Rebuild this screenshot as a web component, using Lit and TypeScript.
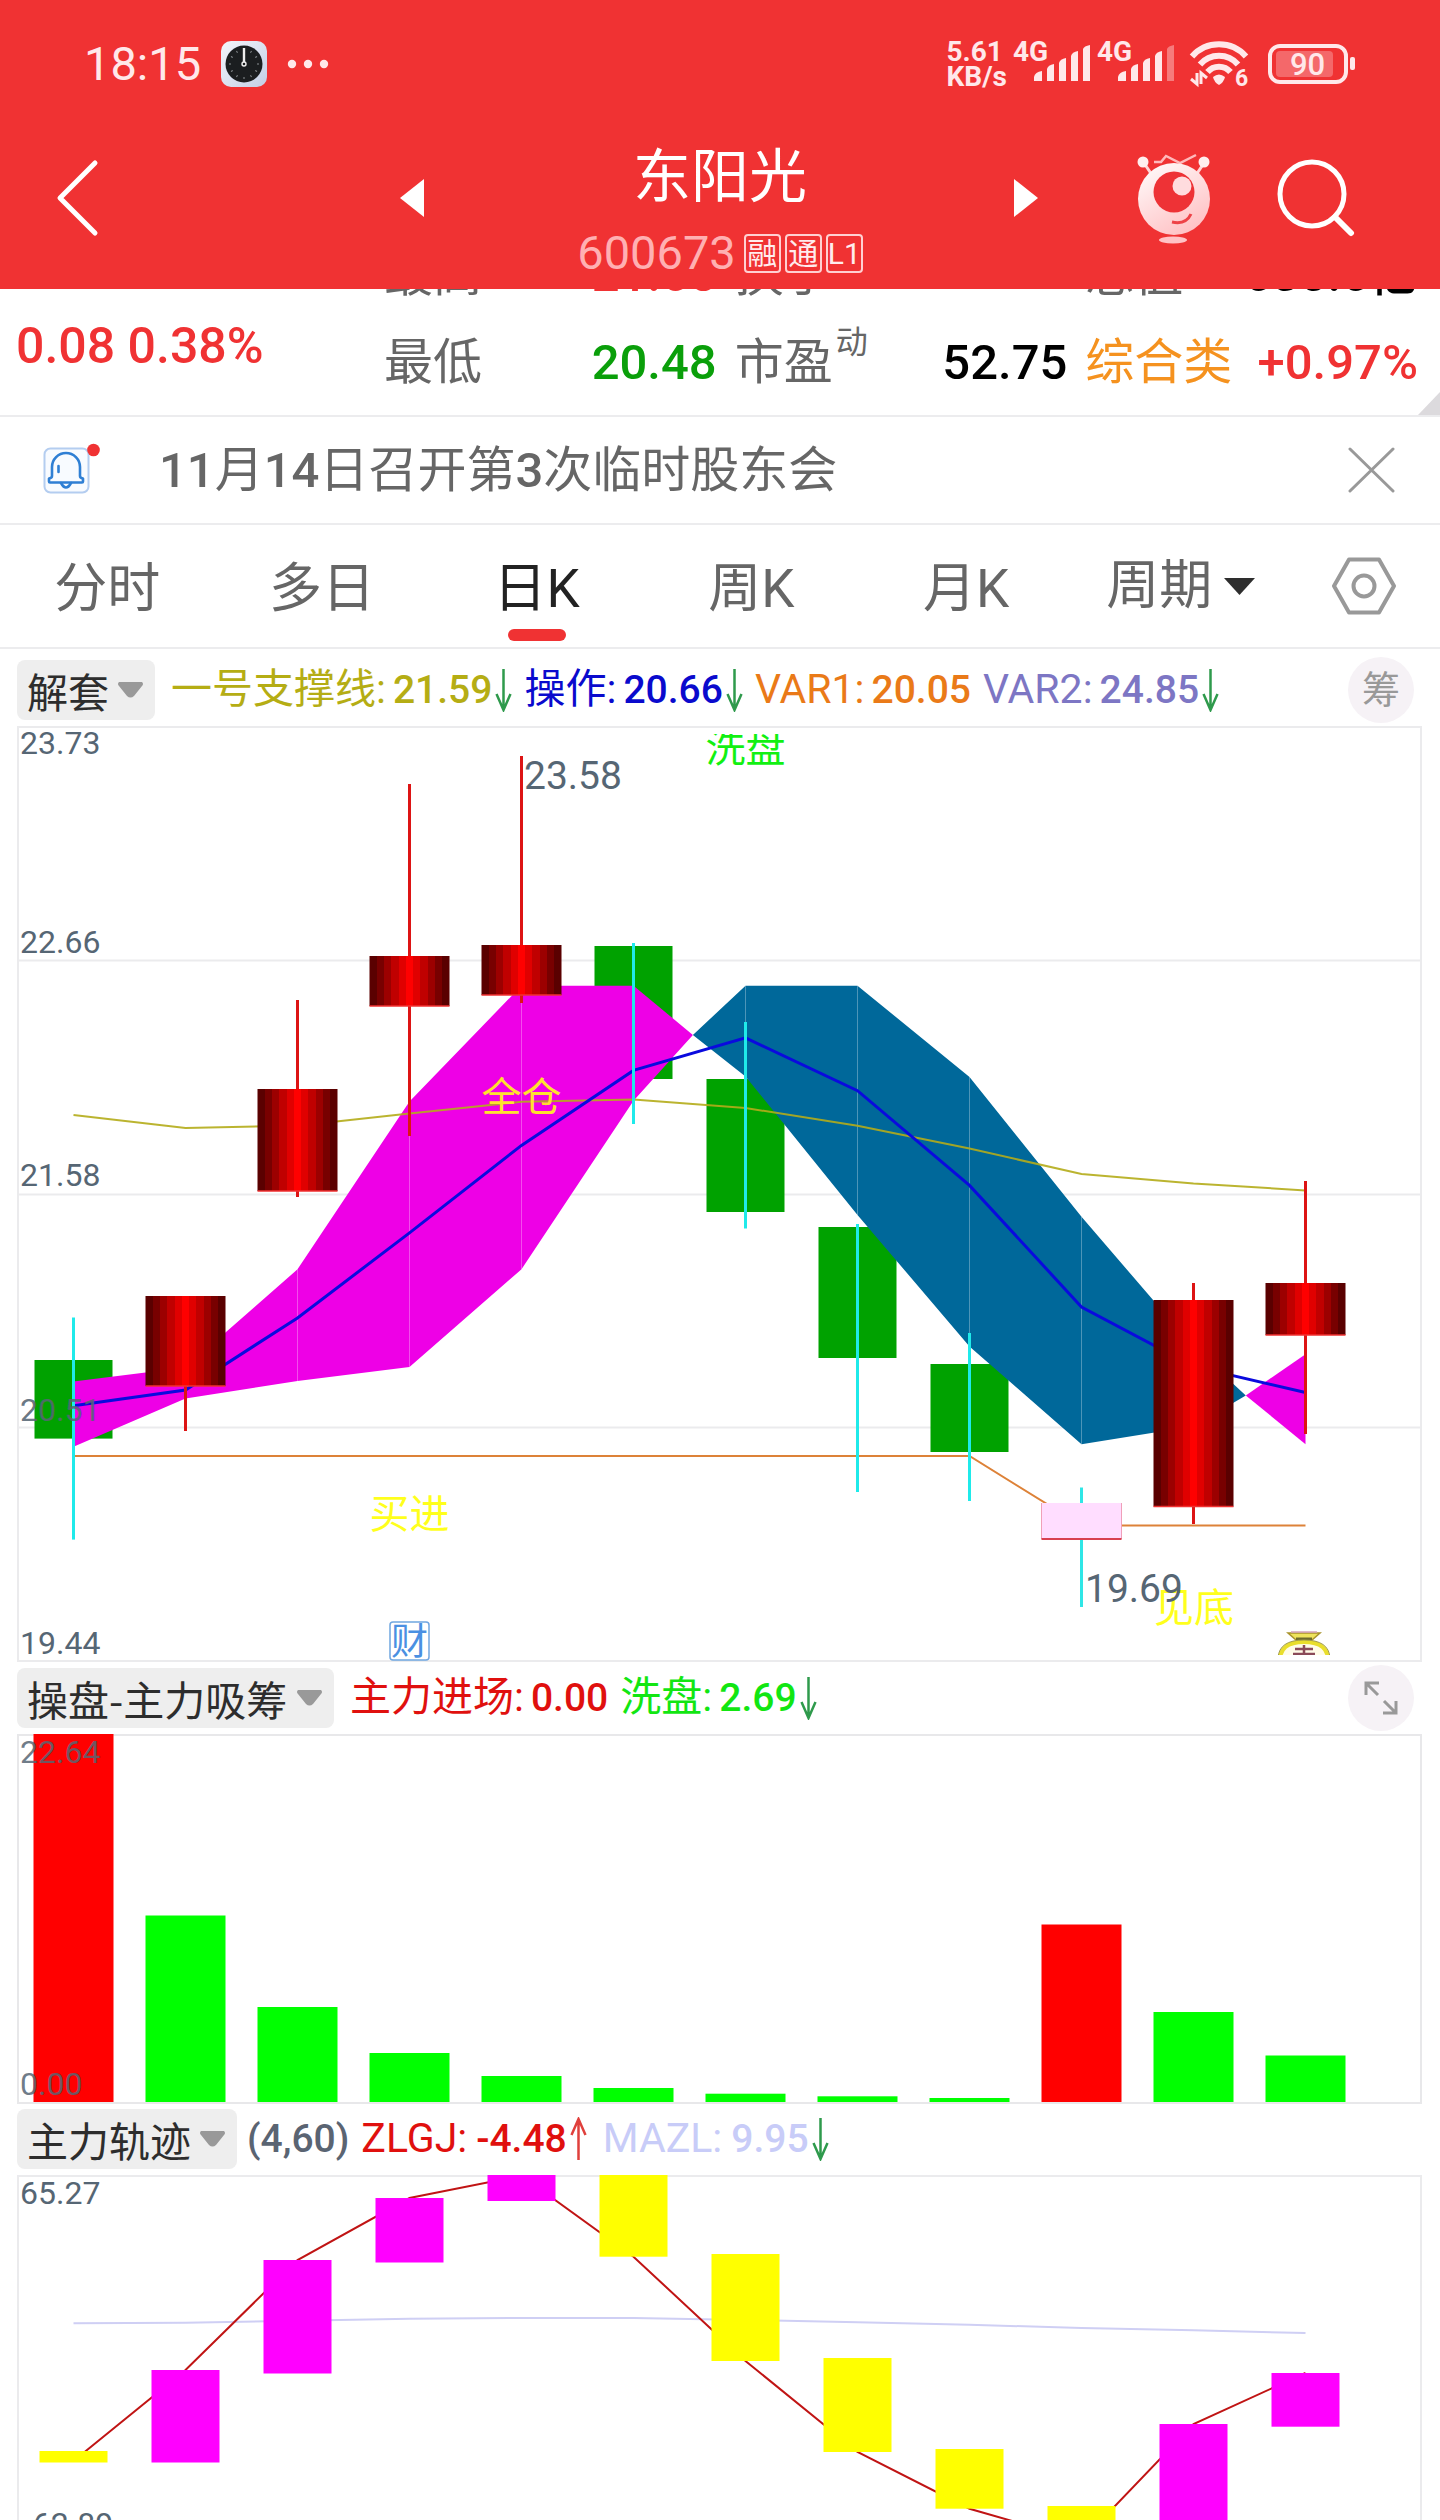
import { LitElement, html, svg, css } from "lit";
import { customElement, property } from "lit/decorators.js";
import { classMap } from "lit/directives/class-map.js";

/* ---------- shared drawing data ---------- */

/* The three panes share one horizontal axis: a column every 112 units. */
const col = (i: number) => 73.5 + i * 112;

const FONT = css`Roboto, "Noto Sans CJK SC", sans-serif`;

type Candle = {
  kind: "down" | "up" | "flat";
  top: number;
  bottom: number;
  high: number;
  low: number;
};

const CANDLES: Candle[] = [
  { kind: "down", top: 1360, bottom: 1438.6, high: 1317.5, low: 1539.6 },
  { kind: "up", top: 1296, bottom: 1386, high: 1296, low: 1431 },
  { kind: "up", top: 1089, bottom: 1191, high: 1000, low: 1197 },
  { kind: "up", top: 956, bottom: 1006, high: 784, low: 1136 },
  { kind: "up", top: 945, bottom: 995, high: 756, low: 1003 },
  { kind: "down", top: 946, bottom: 1079, high: 943, low: 1124 },
  { kind: "down", top: 1079, bottom: 1212, high: 1022, low: 1228.5 },
  { kind: "down", top: 1227, bottom: 1358, high: 1224, low: 1492 },
  { kind: "down", top: 1364, bottom: 1452, high: 1333, low: 1501 },
  { kind: "flat", top: 1503, bottom: 1539, high: 1487.5, low: 1607 },
  { kind: "up", top: 1300, bottom: 1506.5, high: 1283, low: 1524 },
  { kind: "up", top: 1283, bottom: 1335, high: 1181, low: 1434 },
];

const BAND_UPPER = [1381.4, 1367.6, 1269.3, 1101.4, 985.7, 985.7];
const BAND_LOWER = [1446.8, 1398.6, 1381, 1367, 1269.3, 1100.7];
const BLUE_UPPER = [985.7, 985.7, 1077, 1216.8, 1347];
const BLUE_LOWER = [1076.4, 1215, 1346.4, 1444.3, 1426.3];

const OPERATE = [1405.7, 1390, 1317.9, 1232.9, 1145.4, 1070.4, 1037.9, 1090.7, 1185.4, 1307, 1366.4, 1392.5];
const SUPPORT = [1115, 1128, 1125.7, 1113.6, 1101.8, 1099.6, 1108, 1125.7, 1148.6, 1174, 1183.6, 1190.4];
const VAR1 = [1456, 1456, 1456, 1456, 1456, 1456, 1456, 1456, 1456, 1525.4, 1525.4, 1525.4];

const VOLUME = [1733, 1915.5, 2007, 2053, 2076, 2088, 2093.7, 2096.3, 2098, 1924.5, 2012, 2055.5];
const VOLUME_RED = new Set([0, 9]);

const TRACK_BOXES: Array<[number, number, boolean]> = [
  [2451, 2462.5, false],
  [2370, 2462.5, true],
  [2260, 2373.5, true],
  [2198, 2262.5, true],
  [2174.5, 2201, true],
  [2174.5, 2256.7, false],
  [2254, 2361, false],
  [2358, 2452, false],
  [2449, 2508.7, false],
  [2506, 2560, false],
  [2424, 2560, true],
  [2373, 2426.7, true],
];
const ZLGJ = [2461, 2370, 2260, 2198, 2175.7, 2256.7, 2361, 2452, 2508.7, 2541, 2424, 2373];
const MAZL = [2323.3, 2322.7, 2320.7, 2318.7, 2318, 2318, 2320, 2322.3, 2324.7, 2328, 2330.3, 2333];

const line = (ys: number[]) => ys.map((y, i) => `${col(i)},${y}`).join(" ");
const ribbon = (upper: number[], lower: number[], from = 0) => {
  const a = upper.map((y, i) => `${col(i + from)},${y}`);
  const b = lower.map((y, i) => `${col(i + from)},${y}`).reverse();
  return { a, b };
};

/* ---------- status bar and title ---------- */

@customElement("stock-header")
class StockHeader extends LitElement {
  static styles = css`
    :host {
      display: block;
      background: #f03233;
      color: #fff;
      font-family: ${FONT};
      height: 289px;
    }
    .status {
      display: flex;
      align-items: center;
      height: 128px;
      padding: 0 84px;
      color: #ffe8ea;
    }
    .time {
      font-size: 47px;
      line-height: 56px;
    }
    .clock { margin-left: 20px; }
    .dots { margin-left: 20px; }
    .right {
      display: flex;
      align-items: center;
      margin-left: auto;
      gap: 6px;
    }
    .speed {
      font-size: 28px;
      font-weight: 700;
      line-height: 25px;
    }
    .wifi { margin-left: 8px; }
    .battery { margin-left: 13px; }
    .nav {
      display: grid;
      grid-template-columns: 1fr 640px 1fr;
      padding-top: 12px;
    }
    .side {
      display: flex;
      align-items: center;
      height: 116px;
    }
    .start { padding-left: 54px; }
    .end {
      justify-content: flex-end;
      gap: 66px;
      padding-right: 85px;
    }
    .middle {
      display: flex;
      justify-content: space-between;
      align-items: flex-start;
    }
    button {
      display: flex;
      align-items: center;
      padding: 0;
      border: 0;
      background: none;
      color: inherit;
      font: inherit;
    }
    .step { height: 116px; }
    .name {
      margin: 0;
      padding-top: 3px;
      font-size: 58px;
      font-weight: 400;
      line-height: 68px;
      text-align: center;
    }
    .code {
      display: flex;
      align-items: center;
      justify-content: center;
      gap: 4px;
      margin-top: 22px;
      font-size: 47px;
      line-height: 40px;
      color: #ffb0b2;
    }
    .code-number { margin-right: 4px; }
    .tag {
      box-sizing: border-box;
      width: 37px;
      height: 39px;
      border: 2px solid #ffd0d2;
      border-radius: 4px;
      color: #ffeced;
      font-size: 30px;
      line-height: 35px;
      text-align: center;
    }
    svg { display: block; flex: none; }
    .svg-label {
      font-family: ${FONT};
      font-weight: 700;
      font-size: 28px;
      fill: #ffe8ea;
    }
    .level { font-size: 31px; font-weight: 500; }
    .tiny { font-size: 23px; }
  `;

  private signal(weak: boolean) {
    return html`<svg width="78" height="48" viewBox="0 0 78 48" aria-hidden="true">
      <text class="svg-label" x="0" y="21">4G</text>
      <g fill="#ffe8ea">
        <path d="M21 41v-4q1-5 8-6v10z" />
        <path d="M34 41V29q1-4 7-5v17z" />
        <path d="M46 41V23q1-4 7-5v23z" />
        <path d="M58 41V16q1-4 7-5v30z" />
        <path d="M70 41V9q1-3 7-4v36z" opacity=${weak ? 0.4 : 1} />
      </g>
    </svg>`;
  }

  render() {
    return html`
      <div class="status">
        <span class="time">18:15</span>
        <svg class="clock" width="46" height="46" viewBox="0 0 46 46" aria-hidden="true">
          <defs>
            <linearGradient id="case" x1="0" y1="0" x2="1" y2="1">
              <stop offset="0" stop-color="#f4f5fb" /><stop offset="1" stop-color="#c3cfe6" />
            </linearGradient>
          </defs>
          <rect width="46" height="46" rx="10" fill="url(#case)" />
          <circle cx="23" cy="23" r="18.5" fill="#1b1e20" />
          ${[1, 2, 3, 4, 5, 6, 7, 8, 9, 10, 11].map(
            (h) => svg`<path d="M23 8v2" stroke="#8a8f92" stroke-width="1" transform="rotate(${h * 30} 23 23)" />`
          )}
          <path d="M23 7v14" stroke="#eee" stroke-width="2.4" />
          <circle cx="23" cy="23" r="2" fill="#1b1e20" stroke="#eee" stroke-width="1.4" />
        </svg>
        <svg class="dots" width="42" height="10" viewBox="0 0 42 10" fill="#ffe8ea" aria-hidden="true">
          <circle cx="5" cy="5" r="4.2" /><circle cx="21" cy="5" r="4.2" /><circle cx="37" cy="5" r="4.2" />
        </svg>
        <div class="right">
          <div class="speed">5.61<br />KB/s</div>
          ${this.signal(false)} ${this.signal(true)}
          <svg class="wifi" width="60" height="48" viewBox="0 0 60 48" aria-hidden="true">
            <g fill="none" stroke="#ffe8ea" stroke-width="6">
              <path d="M3 16.500A36 36 0 0 1 57 16.500" />
              <path d="M11 24.500A25 25 0 0 1 49 24.500" />
              <path d="M18.500 32A15 15 0 0 1 41.500 32" />
            </g>
            <path d="M24 37q6-5 12 0q-1 5-6 8q-5-3-6-8z" fill="#ffe8ea" />
            <path d="M8 33v11L2 39M12 44V33l6 5" fill="none" stroke="#ffe8ea" stroke-width="3" />
            <text class="svg-label tiny" x="46" y="46">6</text>
          </svg>
          <svg class="battery" width="88" height="40" viewBox="0 0 88 40" aria-hidden="true">
            <rect x="2" y="2" width="76" height="36" rx="10" fill="none" stroke="#ffe8ea" stroke-width="4" />
            <rect x="8" y="7" width="57" height="26" rx="4" fill="#ffe8ea" opacity="0.3" />
            <rect x="82" y="13" width="5" height="13" rx="2" fill="#ffe8ea" />
            <text class="svg-label level" x="22" y="31">90</text>
          </svg>
        </div>
      </div>
      <div class="nav">
        <div class="side start">
          <button aria-label="返回">
            <svg width="46" height="80" viewBox="0 0 46 80" fill="none" stroke="#fff" stroke-width="5" stroke-linecap="round" stroke-linejoin="round">
              <path d="M41 5L6 40L41 75" />
            </svg>
          </button>
        </div>
        <div class="middle">
          <button class="step" aria-label="上一只">
            <svg width="26" height="38" viewBox="0 0 26 38" fill="#fff"><path d="M24 0v38L0 19z" /></svg>
          </button>
          <div>
            <h1 class="name">东阳光</h1>
            <div class="code">
              <span class="code-number">600673</span>
              <span class="tag">融</span><span class="tag">通</span><span class="tag">L1</span>
            </div>
          </div>
          <button class="step" aria-label="下一只">
            <svg width="26" height="38" viewBox="0 0 26 38" fill="#fff"><path d="M0 0v38l24-19z" /></svg>
          </button>
        </div>
        <div class="side end">
          <button aria-label="智能助手">
            <svg width="74" height="92" viewBox="0 0 74 92">
              <defs>
                <linearGradient id="skin" x1="0" y1="0" x2="0.6" y2="1">
                  <stop offset="0" stop-color="#fff" /><stop offset="0.45" stop-color="#ffe3e4" /><stop offset="1" stop-color="#ffc3c6" />
                </linearGradient>
              </defs>
              <path d="M17 10h7l5-6l14 7l16-8" fill="none" stroke="#ffb9bb" stroke-width="2.500" />
              <path d="M7 11l8 12M67 11l-8 12" stroke="#ffd6d8" stroke-width="3" />
              <circle cx="6" cy="10" r="5.500" fill="#ffeeee" /><circle cx="67" cy="10" r="5.500" fill="#ffeeee" />
              <circle cx="37" cy="47" r="36" fill="url(#skin)" />
              <circle cx="37" cy="40" r="20.500" fill="#ee3236" />
              <circle cx="45" cy="34" r="9.500" fill="#ffdcde" />
              <path d="M35 70q14 3 19-8" fill="none" stroke="#ee4247" stroke-width="3" />
              <ellipse cx="36" cy="88" rx="14" ry="3.500" fill="#ffc3c6" />
            </svg>
          </button>
          <button aria-label="搜索">
            <svg width="78" height="78" viewBox="0 0 78 78" fill="none" stroke="#fff" stroke-width="5" stroke-linecap="round">
              <circle cx="35" cy="35" r="32" /><path d="M58 58L74 74" stroke-width="6" />
            </svg>
          </button>
        </div>
      </div>
    `;
  }
}

/* ---------- quote figures, notice and period tabs ---------- */

@customElement("stock-quote")
class StockQuote extends LitElement {
  static styles = css`
    :host {
      display: block;
      font-family: ${FONT};
      font-size: 49px;
      color: #666;
    }
    .quote, .notice, .tabs {
      box-sizing: border-box;
      border-bottom: 2px solid #ececee;
    }
    .quote {
      position: relative;
      display: grid;
      grid-template-columns: 350px 1fr 1fr 1fr;
      grid-template-rows: 100%;
      column-gap: 18px;
      height: 128px;
      padding: 0 22px 0 16px;
      overflow: hidden;
    }
    .change {
      margin-top: 13px;
      color: #f03233;
      font-size: 50px;
      font-weight: 500;
      line-height: 88px;
      white-space: nowrap;
    }
    .list {
      display: flex;
      flex-direction: column;
      justify-content: flex-end;
      margin: 0;
      padding-bottom: 8px;
    }
    .item {
      display: flex;
      flex: none;
      justify-content: space-between;
      height: 88px;
      line-height: 88px;
      white-space: nowrap;
    }
    .item dt { display: flex; }
    .item dd { margin: 0; font-weight: 500; }
    .sup {
      margin-left: 3px;
      font-size: 32px;
      line-height: 46px;
    }
    .green { color: #0a9f0a; }
    .red { color: #f03233; }
    .black { color: #000; }
    .orange { color: #f5921f; }
    .corner {
      position: absolute;
      right: 0;
      bottom: 0;
    }
    .notice {
      display: flex;
      align-items: center;
      height: 108px;
      padding: 0 45px 0 43px;
    }
    .notice-text {
      margin-left: 59px;
      padding-top: 2px;
      line-height: 70px;
      color: #666;
    }
    .digits { font-weight: 500; }
    .close { margin-left: auto; }
    .tabs {
      display: flex;
      height: 124px;
      font-size: 53px;
    }
    button, select {
      display: block;
      padding: 0;
      border: 0;
      background: none;
      color: inherit;
      font: inherit;
      appearance: none;
    }
    .tab {
      position: relative;
      display: flex;
      flex: 1;
      align-items: center;
      justify-content: center;
      white-space: nowrap;
    }
    button.tab { padding-bottom: 4px; }
    .current { color: #222; }
    .current::after {
      content: "";
      position: absolute;
      left: calc(50% - 29px);
      bottom: 6px;
      width: 58px;
      height: 12px;
      border-radius: 6px;
      background: #f03233;
    }
    .period { gap: 12px; }
    .period select { height: 80px; line-height: 80px; }
    .settings {
      display: flex;
      align-items: center;
      justify-content: center;
      width: 152px;
    }
    svg { display: block; }
  `;

  render() {
    const tabs = ["分时", "多日", "日K", "周K", "月K"];
    return html`
      <section class="quote">
        <div class="change">0.08 0.38%</div>
        <dl class="list">
          <div class="item"><dt>最高</dt><dd class="red">21.65</dd></div>
          <div class="item"><dt>最低</dt><dd class="green">20.48</dd></div>
        </dl>
        <dl class="list">
          <div class="item"><dt>换手</dt><dd class="black"></dd></div>
          <div class="item"><dt>市盈<span class="sup">动</span></dt><dd class="black">52.75</dd></div>
        </dl>
        <dl class="list">
          <div class="item"><dt>总值</dt><dd class="black">630.6亿</dd></div>
          <div class="item"><dt class="orange">综合类</dt><dd class="red">+0.97%</dd></div>
        </dl>
        <svg class="corner" width="22" height="23" viewBox="0 0 22 23"><path d="M22 0v23H0z" fill="#dcdadd" /></svg>
      </section>
      <section class="notice">
        <svg width="57" height="54" viewBox="0 0 57 54" aria-hidden="true">
          <rect x="1.500" y="5.500" width="44" height="44" rx="6" fill="#f8fbff" stroke="#b4cdf0" stroke-width="2" />
          <g fill="none" stroke="#2f7fd4" stroke-width="2.600" stroke-linejoin="round" stroke-linecap="round">
            <path d="M9 33V24a14 14 0 0 1 28 0v9q0 2 3 2.500v3q0 1-1 1H7q-1 0-1-1v-3q3-.5 3-2.500z" />
            <path d="M18 40q5 9 10 0M15.500 23v6" />
          </g>
          <circle cx="50.500" cy="7" r="6.300" fill="#f03233" />
        </svg>
        <span class="notice-text"><span class="digits">11</span>月<span class="digits">14</span>日召开第<span class="digits">3</span>次临时股东会</span>
        <button class="close" aria-label="关闭">
          <svg width="47" height="46" viewBox="0 0 47 46" stroke="#999" stroke-width="3" stroke-linecap="round"><path d="M2 2L45 44M45 2L2 44" /></svg>
        </button>
      </section>
      <nav class="tabs">
        ${tabs.map((t) => html`<button class=${classMap({ tab: true, current: t === "日K" })}>${t}</button>`)}
        <label class="tab period">
          <select aria-label="周期"><option>周期</option></select>
          <svg width="31" height="17" viewBox="0 0 31 17"><path d="M0 0h31L15.500 17z" fill="#2e2e2e" /></svg>
        </label>
        <button class="settings" aria-label="设置">
          <svg width="64" height="58" viewBox="0 0 64 58" fill="none" stroke="#999" stroke-width="4" stroke-linejoin="round">
            <path d="M17 2.500H47L62 29L47 55.500H17L2 29z" /><circle cx="32" cy="29" r="10.500" />
          </svg>
        </button>
      </nav>
    `;
  }
}

/* ---------- legend line above each pane ---------- */

type Reading = { label: string; value: string; tone: string; trend?: "up" | "down" };

@customElement("pane-legend")
class PaneLegend extends LitElement {
  static styles = css`
    :host {
      box-sizing: border-box;
      display: flex;
      align-items: flex-end;
      padding: 0 24px 6px 17px;
      font-family: ${FONT};
      font-size: 41px;
      line-height: 60px;
      white-space: nowrap;
    }
    .picker {
      display: flex;
      align-items: center;
      gap: 9px;
      height: 60px;
      margin-right: 16px;
      padding: 0 12px 0 10px;
      border-radius: 8px;
      background: #eee;
      color: #2d2d2d;
      font-family: "Noto Sans CJK SC", sans-serif;
    }
    .tight { margin-right: 10px; }
    select {
      display: block;
      box-sizing: border-box;
      height: 60px;
      padding: 0 0 5px;
      border: 0;
      background: none;
      color: inherit;
      font: inherit;
      appearance: none;
    }
    .params {
      margin-right: 12px;
      color: #5a6472;
      font-size: 39px;
      font-weight: 500;
    }
    .reading {
      display: flex;
      align-items: baseline;
      margin-right: 12px;
    }
    .params ~ .reading { margin-right: 16px; }
    .params ~ .reading .value { margin-left: 9px; }
    .value { margin-left: 7px; font-size: 39px; font-weight: 500; }
    .trend { align-self: center; margin-left: 3px; }
    .olive { color: #b5ad14; }
    .blue { color: #0a0acd; }
    .orange { color: #ea7a18; }
    .violet { color: #7d76c4; }
    .red { color: #e0100e; }
    .green { color: #12e612; }
    .lavender { color: #c8ccf8; }
    .round {
      display: flex;
      align-items: center;
      justify-content: center;
      width: 66px;
      height: 66px;
      margin: 0 2px -3px auto;
      padding: 0;
      border: 0;
      border-radius: 33px;
      background: #f6f2f6;
      color: #999;
      font: inherit;
      font-size: 38px;
    }
    svg { display: block; }
  `;

  @property() name = "";
  @property() params = "";
  @property() action = "";
  @property({ attribute: false }) readings: Reading[] = [];

  private arrow(trend: "up" | "down") {
    return trend === "down"
      ? html`<svg class="trend" width="17" height="44" viewBox="0 0 17 44" fill="none" stroke="#2f9a4c" stroke-width="2.500"><path d="M8.500 1V42M1.500 26L8.500 42L15.500 26" /></svg>`
      : html`<svg class="trend" width="17" height="44" viewBox="0 0 17 44" fill="none" stroke="#e0403c" stroke-width="2.500"><path d="M8.500 43V2M1.500 18L8.500 2L15.500 18" /></svg>`;
  }

  render() {
    return html`
      <label class=${classMap({ picker: true, tight: !!this.params })}>
        <select aria-label="指标"><option>${this.name}</option></select>
        <svg width="25" height="16" viewBox="0 0 25 16" fill="#999"><path d="M1 0h23q2 2 0 4L16 14q-3.500 3-7 0L1 4Q-1 2 1 0z" /></svg>
      </label>
      ${this.params ? html`<span class="params">${this.params}</span>` : ""}
      ${this.readings.map(
        (r) => html`<span class="reading ${r.tone}">
          <span>${r.label}:</span><span class="value">${r.value}</span>${r.trend ? this.arrow(r.trend) : ""}
        </span>`
      )}
      ${this.action === "chips" ? html`<button class="round">筹</button>` : ""}
      ${this.action === "expand"
        ? html`<button class="round" aria-label="展开">
            <svg width="34" height="34" viewBox="0 0 34 34" fill="none" stroke="#999" stroke-width="3">
              <path d="M2 14V2H15M3 3L14 14M32 20V32H19M31 31L20 20" />
            </svg>
          </button>`
        : ""}
    `;
  }
}

/* ---------- chart panes ---------- */

const paneStyles = css`
  :host { display: block; font-family: ${FONT}; }
  svg { display: block; width: 100%; height: auto; }
  .axis { font-size: 32px; fill: #566674; }
  .peak { font-size: 39px; fill: #566674; }
  .mark { font-size: 40px; text-anchor: middle; }
  .badge { font-size: 37px; text-anchor: middle; fill: #4a90e2; }
`;

@customElement("candle-pane")
class CandlePane extends LitElement {
  static styles = [paneStyles];

  private body(c: Candle, i: number) {
    const x = col(i);
    if (c.kind === "up") {
      return svg`
        <path d="M${x} ${c.high}V${c.low}" stroke="#dd1414" stroke-width="3" />
        <rect x=${x - 40} y=${c.top} width="80" height=${c.bottom - c.top} fill="url(#barrel)" />
        <path d="M${x - 40} ${c.bottom}h80" stroke="#f03030" stroke-width="1.500" />`;
    }
    if (c.kind === "flat") {
      return svg`
        <path d="M${x} ${c.high}V${c.low}" stroke="#2fe6e6" stroke-width="3" />
        <rect x=${x - 40} y=${c.top} width="80" height=${c.bottom - c.top} fill="#ffddff" />
        <path d="M${x - 40} ${c.top}V${c.bottom}M${x + 40} ${c.top}V${c.bottom}" stroke="#f0a0b8" />
        <path d="M${x - 40} ${c.bottom}h80" stroke="#d84050" stroke-width="2" />`;
    }
    return svg`<path d="M${x} ${c.high}V${c.low}" stroke="#1feaea" stroke-width="3" />`;
  }

  render() {
    const pink = ribbon(BAND_UPPER, BAND_LOWER);
    const blue = ribbon(BLUE_UPPER, BLUE_LOWER, 6);
    const shades = ["#5a0000", "#780000", "#9c0000", "#c00000", "#e00000", "#ff0000", "#e00000", "#c00000", "#9c0000", "#780000", "#5a0000"];
    return html`<svg viewBox="0 726 1440 936" role="img" aria-label="日K线图">
      <defs>
        <linearGradient id="barrel">
          ${shades.map((s, i) => svg`<stop offset=${i / 11} stop-color=${s} /><stop offset=${(i + 1) / 11} stop-color=${s} />`)}
        </linearGradient>
        <clipPath id="inner"><rect x="18" y="734" width="1403" height="921" /></clipPath>
      </defs>
      <g fill="none" stroke="#ebebed" stroke-width="2">
        <rect x="18" y="727" width="1403" height="934" />
        <path d="M18 960.500H1421M18 1194.500H1421M18 1427.500H1421" />
      </g>
      ${CANDLES.map((c, i) =>
        c.kind === "down"
          ? svg`<rect x=${col(i) - 39} y=${c.top} width="78" height=${c.bottom - c.top} fill="#00a200" />`
          : ""
      )}
      <polygon points="${pink.a.join(" ")} 692.9,1035 ${pink.b.join(" ")}" fill="#ee00e6" />
      <polygon points="692.9,1035 ${blue.a.join(" ")} 1245.800,1395.400 ${blue.b.join(" ")}" fill="#00689a" />
      <polygon points="1245.800,1395.400 ${col(11)},1354.300 ${col(11)},1444.300" fill="#ee00e6" />
      <g stroke="#fff" stroke-opacity="0.3" stroke-width="1">
        ${[2, 3, 4].map((i) => svg`<path d="M${col(i)} ${BAND_UPPER[i]}V${BAND_LOWER[i]}" />`)}
        ${[6, 7, 8, 9].map((i) => svg`<path d="M${col(i)} ${BLUE_UPPER[i - 6]}V${BLUE_LOWER[i - 6]}" />`)}
      </g>
      <g fill="none">
        <polyline points=${line(SUPPORT)} stroke="#b4ac1a" stroke-opacity="0.9" stroke-width="2" />
        <polyline points=${line(VAR1)} stroke="#dd8238" stroke-width="2" />
        <polyline points=${line(OPERATE)} stroke="#0a0ade" stroke-width="3" />
      </g>
      ${CANDLES.map((c, i) => this.body(c, i))}
      <g class="axis">
        <text x="20" y="754">23.73</text>
        <text x="20" y="953">22.66</text>
        <text x="20" y="1186">21.58</text>
        <text x="20" y="1421" fill-opacity="0.9">20.51</text>
        <text x="20" y="1654">19.44</text>
      </g>
      <g clip-path="url(#inner)">
        <text class="mark" x="745.500" y="762" fill="#12f012">洗盘</text>
      </g>
      <text class="mark" x="521.500" y="1111" fill="#ffe02e">全仓</text>
      <text class="mark" x="409.500" y="1528" fill="#ffff1c">买进</text>
      <text class="mark" x="1194" y="1622" fill="#ffff1c">见底</text>
      <text class="peak" x="524" y="789">23.58</text>
      <text class="peak" x="1085" y="1602">19.69</text>
      <rect x="390" y="1622" width="39" height="38" rx="3" fill="#fff" stroke="#6fa6e0" stroke-width="1.500" />
      <text class="badge" x="409.500" y="1655">财</text>
      <g clip-path="url(#inner)">
        <path d="M1288 1633h32l-8 7h-16z" fill="#efe35c" stroke="#a9932b" stroke-width="1.500" />
        <path d="M1291 1632h26" stroke="#d5a5b8" stroke-width="1.500" />
        <path d="M1296 1639h16" stroke="#6e6b2c" stroke-width="3" />
        <path d="M1280 1662q-1-20 24-20t24 20z" fill="#fffce8" stroke="#e9de2c" stroke-width="4" />
        <path d="M1278 1658q1-18 26-18t26 18" fill="none" stroke="#a09a4a" stroke-width="1" />
        <path d="M1295 1649h18M1293 1654h22M1304 1645v10" stroke="#8a4a58" stroke-width="2.500" />
      </g>
    </svg>`;
  }
}

@customElement("volume-pane")
class VolumePane extends LitElement {
  static styles = [paneStyles];
  render() {
    return html`<svg viewBox="0 1734 1440 370" role="img" aria-label="主力吸筹">
      <rect x="18" y="1735" width="1403" height="368" fill="none" stroke="#e8e8ea" stroke-width="2" />
      ${VOLUME.map(
        (y, i) => svg`<rect x=${col(i) - 40} y=${y} width="80" height=${2102 - y} fill=${VOLUME_RED.has(i) ? "#ff0000" : "#00ff00"} />`
      )}
      <g class="axis" fill-opacity="0.85">
        <text x="20" y="1763">22.64</text>
        <text x="20" y="2095">0.00</text>
      </g>
    </svg>`;
  }
}

@customElement("track-pane")
class TrackPane extends LitElement {
  static styles = [paneStyles];
  render() {
    return html`<svg viewBox="0 2175 1440 345" role="img" aria-label="主力轨迹">
      <path d="M18 2530V2176H1421V2530" fill="none" stroke="#ebebed" stroke-width="2" />
      <polyline points=${line(MAZL)} fill="none" stroke="#cfcff4" stroke-width="2" />
      <polyline points=${line(ZLGJ)} fill="none" stroke="#c01414" stroke-width="2" />
      ${TRACK_BOXES.map(
        ([top, bottom, rising], i) =>
          svg`<rect x=${col(i) - 34} y=${top} width="68" height=${bottom - top} fill=${rising ? "#ff00ff" : "#ffff00"} />`
      )}
      <g class="axis">
        <text x="20" y="2204">65.27</text>
        <text x="24" y="2535">-62.89</text>
      </g>
    </svg>`;
  }
}

/* ---------- page ---------- */

@customElement("app-root")
class AppRoot extends LitElement {
  static styles = css`
    :host { display: block; background: #fff; }
    .page { overflow: hidden; }
    .first { height: 77px; }
    .second { height: 72px; }
    .third { height: 71px; }
  `;

  render() {
    return html`<main class="page">
      <stock-header></stock-header>
      <stock-quote></stock-quote>
      <pane-legend
        class="first"
        name="解套"
        action="chips"
        .readings=${[
          { label: "一号支撑线", value: "21.59", tone: "olive", trend: "down" },
          { label: "操作", value: "20.66", tone: "blue", trend: "down" },
          { label: "VAR1", value: "20.05", tone: "orange" },
          { label: "VAR2", value: "24.85", tone: "violet", trend: "down" },
        ]}
      ></pane-legend>
      <candle-pane></candle-pane>
      <pane-legend
        class="second"
        name="操盘-主力吸筹"
        action="expand"
        .readings=${[
          { label: "主力进场", value: "0.00", tone: "red" },
          { label: "洗盘", value: "2.69", tone: "green", trend: "down" },
        ]}
      ></pane-legend>
      <volume-pane></volume-pane>
      <pane-legend
        class="third"
        name="主力轨迹"
        params="(4,60)"
        .readings=${[
          { label: "ZLGJ", value: "-4.48", tone: "red", trend: "up" },
          { label: "MAZL", value: "9.95", tone: "lavender", trend: "down" },
        ]}
      ></pane-legend>
      <track-pane></track-pane>
    </main>`;
  }
}
